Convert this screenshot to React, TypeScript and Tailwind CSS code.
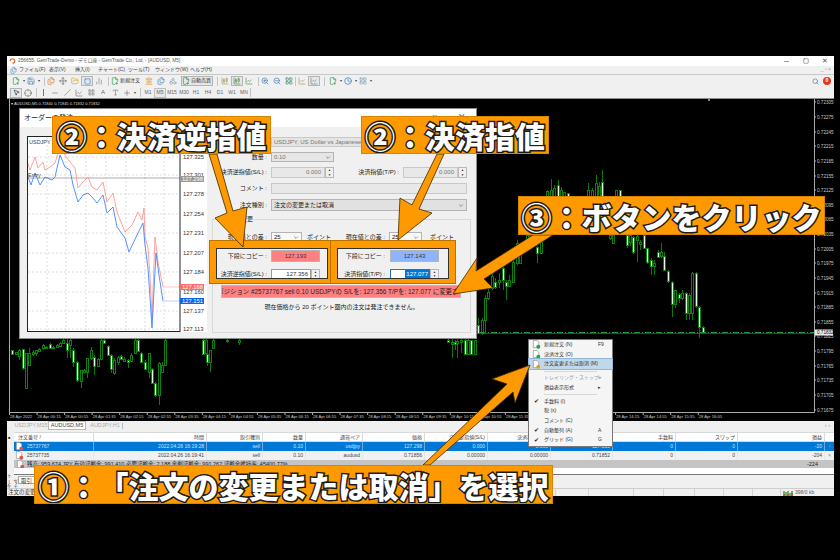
import React from 'react';
import {
  ChartCandlestick, ChartLine, ChartNoAxesColumn, Clock, Crosshair, FilePlus2, Files, FolderOpen, Landmark,
  LayoutGrid, Minus, MousePointer2, Move, Plus, Save, Search, Shapes, Slash, Square, Type, ZoomIn, ZoomOut,
} from 'lucide-react';

// x, wick top, body top, body bottom, wick bottom, light body
const candles: number[][] = [
  [12,350,350,354,355,1],[16,352,352,354,355,0],[19,349,350,356,360,0],[23,349,349,368,370,1],[26,353,353,388,388,0],[29,348,353,365,365,0],
  [33,350,352,354,356,0],[36,350,350,353,356,0],[39,348,349,351,352,0],[43,344,345,348,350,0],[46,346,347,348,349,0],[50,343,344,348,349,1],[53,346,347,348,348,0],[57,344,345,347,348,0],
  [60,342,343,346,347,0],[63,339,340,343,344,0],[67,339,343,350,358,1],[70,339,340,345,358,0],[73,348,350,362,367,1],[77,361,362,380,382,1],[81,370,370,381,388,0],[84,369,370,372,373,0],
  [87,358,358,372,378,0],[91,347,350,358,360,0],[94,355,357,366,375,1],[98,358,359,366,367,0],[101,339,340,359,360,0],[104,339,340,343,344,1],[108,345,346,355,356,1],[111,354,355,369,373,1],
  [114,358,360,373,375,0],[118,356,357,362,365,0],[121,355,356,359,360,1],[124,357,359,361,362,0],[128,359,360,362,368,1],[131,353,355,361,362,0],[135,339,340,353,354,0],[138,339,340,351,352,1],
  [141,352,353,362,363,1],[145,360,362,369,370,1],[149,353,353,372,378,0],[152,368,369,383,384,1],[155,382,383,395,397,1],[159,362,363,395,405,0],[162,362,365,372,372,0],[165,339,340,365,366,0],
  [203,339,340,354,355,1],[206,339,340,353,355,0],[207,352,354,362,366,1],[210,350,350,362,372,0],[213,339,340,348,349,0],[227,339,340,341,343,0],[239,339,340,342,345,0],
  [448,339,340,342,343,1],[452,339,342,344,358,0],[455,340,342,344,350,1],[457,339,341,343,358,0],[461,339,340,342,353,0],[465,339,340,354,354,1],[468,339,340,354,354,0],
  [471,340,340,354,354,1],[475,340,340,354,354,0],[478,318,325,333,334,1],[482,318,320,333,335,0],[485,295,298,320,333,0],[488,288,292,298,300,0],[492,273,276,288,290,0],[495,278,282,287,289,1],
  [499,273,280,282,288,0],[503,257,268,280,290,1],[506,280,282,286,300,1],[509,275,280,286,287,0],[513,260,262,282,283,0],[517,240,243,263,265,0],[520,245,247,263,264,0],[523,243,245,248,250,0],
  [527,235,235,247,250,0],[530,235,235,245,246,0],[533,235,235,242,243,1],[537,245,247,253,263,1],[541,235,235,253,254,0],[547,190,191,196,196,0],[551,179,190,196,196,0],[554,185,188,196,196,0],
  [558,180,185,196,196,1],[561,187,190,196,196,0],[564,192,192,196,196,0],[568,193,193,196,196,1],[588,183,190,196,196,0],[592,188,190,196,196,0],[596,175,183,196,196,0],[599,182,186,196,196,0],
  [602,170,182,196,196,1],[616,190,190,196,196,0],[620,190,190,196,196,1],[610,235,235,238,240,0],[613,235,235,243,244,0],[627,235,235,245,248,1],[630,235,235,242,246,0],[633,236,237,252,254,1],
  [637,235,236,240,262,0],[640,240,242,244,250,0],[644,235,235,248,249,1],[647,248,248,262,264,1],[651,258,260,266,275,1],[654,260,263,266,275,0],[658,250,252,257,258,1],[661,243,252,256,258,0],
  [664,252,256,270,271,1],[668,270,271,281,283,1],[672,281,282,304,317,1],[675,290,290,304,308,0],[679,293,294,298,303,1],[682,290,293,298,300,0],[686,292,293,313,320,1],[689,293,295,313,320,0],
  [692,272,273,313,320,0],[696,272,273,306,308,1],[699,306,307,327,338,1],[703,326,327,332,333,1],
];

const priceLabels = [
  ['0.72305', 102], ['0.72275', 117], ['0.72245', 132], ['0.72215', 146], ['0.72185', 161], ['0.72155', 176], ['0.72125', 190], ['0.72095', 205],
  ['0.72065', 219], ['0.72035', 234], ['0.72005', 249], ['0.71975', 263], ['0.71945', 278], ['0.71915', 293], ['0.71885', 307], ['0.71855', 322],
  ['0.71825', 336], ['0.71795', 351], ['0.71765', 366], ['0.71735', 380], ['0.71705', 395], ['0.71675', 410],
] as const;

const timeLabels = [
  '28 Apr 2022', '28 Apr 00:15', '28 Apr 00:55', '28 Apr 01:35', '28 Apr 02:15', '28 Apr 02:55', '28 Apr 03:35', '28 Apr 04:15', '28 Apr 04:55',
  '28 Apr 05:35', '28 Apr 06:15', '28 Apr 06:55', '28 Apr 07:35', '28 Apr 08:15', '28 Apr 08:55', '28 Apr 09:35', '28 Apr 10:15', '28 Apr 10:55',
  '28 Apr 11:35', '28 Apr 12:15', '28 Apr 12:55', '28 Apr 13:35', '28 Apr 14:15', '28 Apr 14:55', '28 Apr 15:35', '28 Apr 16:05',
];

const redLine = '27,161 30,170 35,157 38,168 43,162 45,170 50,167 55,163 60,147 65,155 70,162 75,168 78,188 83,182 88,177 92,187 97,190 103,182 107,202 113,193 117,212 125,232 132,225 138,212 142,220 144,208 145,237 148,248 150,275 152,318 155,237 158,262 163,287';
const blueLine = '28,177 31,185 35,173 40,185 45,177 52,180 55,177 60,155 65,167 70,170 73,185 78,202 83,195 88,193 92,197 97,203 103,195 107,213 113,207 117,227 125,238 129,252 138,233 143,223 145,245 148,268 150,298 152,328 156,253 159,275 163,301';
const miniPrices = [
  ['127.325', 157], ['127.301', 175], ['127.278', 194], ['127.254', 214], ['127.231', 233], ['127.207', 253], ['127.184', 272], ['127.160', 292], ['127.137', 311], ['127.113', 329],
] as const;

const columns = [
  { label: '注文番号', w: 'w-[80px]', left: true }, { label: '時間', w: 'w-[113px]' }, { label: '取引種別', w: 'w-[56px]' }, { label: '数量', w: 'w-[43px]' },
  { label: '通貨ペア', w: 'w-[57px]' }, { label: '価格', w: 'w-[62px]' }, { label: '決済逆指値(S/L)', w: 'w-[63px]' }, { label: '決済指値(T/P)', w: 'w-[63px]' },
  { label: '決済価格', w: 'w-[62px]' }, { label: '手数料', w: 'w-[63px]' }, { label: 'スワップ', w: 'w-[62px]' }, { label: '損益', w: 'w-[87px]' },
];

const rows = [
  { selected: true, cells: ['25737767', '2022.04.26 16:19:28', 'sell', '0.10', 'usdjpy', '127.298', '0.000', '0.000', '127.318', '0', '0', '-20'] },
  { selected: false, cells: ['25737735', '2022.04.26 16:19:41', 'sell', '0.10', 'audusd', '0.71856', '0.00000', '0.00000', '0.71852', '0', '0', '-204'] },
];

const menuBar = [
  ['ファイル(F)', 'w-[30px]'], ['表示(V)', 'w-[26px]'], ['挿入(I)', 'w-[23px]'], ['チャート(C)', 'w-[30px]'], ['ツール(T)', 'w-[27px]'], ['ウィンドウ(W)', 'w-[35px]'], ['ヘルプ(H)', 'w-[24px]'],
];

const periods = ['M1', 'M5', 'M15', 'M30', 'H1', 'H4', 'D1', 'W1', 'MN'];

const Tool = ({ children, active }: { children: React.ReactNode; active?: boolean }) => (
  <div className={`flex h-[10px] w-[12px] shrink-0 items-center justify-center ${active ? 'border border-[#b5b5b5] bg-[#e2e8ee]' : ''}`}>{children}</div>
);
const Sep = ({ className }: { className: string }) => <div className={`h-[9px] w-px shrink-0 bg-[#c4c4c4] ${className}`} />;
const Drop = () => <span className="w-[3px] shrink-0 text-center text-[4px] leading-none text-[#444]">▾</span>;

const Spinner = () => (
  <div className="flex h-full w-[9px] shrink-0 flex-col border border-[#b8b8b8] bg-[#f0f0f0] text-center text-[3px] leading-[4px] text-[#222]">
    <span className="flex-1">▲</span>
    <span className="flex-1">▼</span>
  </div>
);

const SelectBox = ({ value, className, muted }: { value: string; className: string; muted?: boolean }) => (
  <div className={`flex items-center justify-between border border-[#b4b4b4] px-[2px] text-[6px] ${muted ? 'bg-[#e6e6e6] text-[#777]' : 'bg-[#f8f8f8] text-[#222]'} ${className}`}>
    <span className="whitespace-nowrap">{value}</span>
    <svg viewBox="0 0 8 5" className="h-[3px] w-[6px]"><path d="M1 1l3 3 3-3" fill="none" stroke="#555" strokeWidth="1" /></svg>
  </div>
);

const Label = ({ text, className }: { text: string; className: string }) => (
  <div className={`shrink-0 whitespace-nowrap pr-[4px] text-right text-[6px] text-[#222] ${className}`}>{text}</div>
);

const DocIcon = ({ badge }: { badge: string }) => (
  <svg viewBox="0 0 10 10" className="h-[9px] w-[9px] shrink-0">
    <path d="M1.5.5h4l2 2v6h-6z" fill="#fff" stroke="#888" strokeWidth=".7" />
    <circle cx="7" cy="7.4" r="2.2" fill={badge} />
  </svg>
);

const MenuItem = ({ text, shortcut, check, icon, muted, arrow, selected }: { text: string; shortcut?: string; check?: boolean; icon?: string; muted?: boolean; arrow?: boolean; selected?: boolean }) => (
  <div className={`flex h-[9.7px] items-center text-[5px] ${muted ? 'text-[#999]' : 'text-[#333]'} ${selected ? 'bg-[#bfd8ea] outline outline-[#8fb8d8]' : ''}`}>
    <div className="flex w-[15px] shrink-0 items-center justify-center text-[6px] text-[#222]">{icon ? <DocIcon badge={icon} /> : check ? '✔' : ''}</div>
    <div className="flex-1 whitespace-nowrap">{text}</div>
    <div className="w-[14px] shrink-0 text-[5px]">{shortcut}{arrow ? '▸' : ''}</div>
  </div>
);

const Callout = ({ text, className }: { text: string; className: string }) => (
  <div className={`absolute flex items-center justify-center overflow-hidden border border-[#d98400] bg-[#ff9900] text-[30px] font-black leading-none whitespace-nowrap text-white font-['Noto_Sans_CJK_JP',sans-serif] [text-spacing-trim:space-all] [-webkit-text-stroke:3px_#1c1c1c] [paint-order:stroke_fill] ${className}`}>
    {text}
  </div>
);

const ChartCanvas = () => (
  <svg viewBox="7 99 827 322" className="block h-[322px] w-[827px]">
    <rect x="7" y="99" width="827" height="322" fill="#000" />
    <path d="M9.5 99V412.5H814.5V99" fill="none" stroke="#aaa" strokeWidth="1" />
    <path d="M709 99v2" stroke="#6a8fb0" strokeWidth="2" />
    <text x="11" y="104.5" fontSize="4" fill="#ddd" fontFamily="Liberation Sans">▾ AUDUSD,M5  0.71840 0.71845 0.71832 0.71832</text>
    {candles.map(([x, t, bt, bb, b, light]) => (
      <g key={`${x}-${bt}`}>
        <path d={`M${x + 0.5} ${t}V${b}`} stroke="#0b7a0b" strokeWidth="1" />
        <rect x={x - 0.5} y={bt + 0.5} width="2" height={Math.max(bb - bt, 1)} fill={light ? '#dcffdc' : '#000'} stroke="#0d800d" strokeWidth="1" />
      </g>
    ))}
    <path d="M480 332.5H814" stroke="#1f9a3a" strokeWidth="1" strokeDasharray="6 2 1 2" />
    <path d="M480 333.5H814" stroke="#666" strokeWidth=".6" />
    {priceLabels.map(([label, y]) => (
      <g key={label}>
        <path d={`M814 ${y}h2`} stroke="#aaa" />
        <text x="817" y={y + 1.6} fontSize="4.6" fill="#c8c8c8" fontFamily="Liberation Sans">{label}</text>
      </g>
    ))}
    <rect x="815" y="329.5" width="18" height="6" fill="#e8e8e8" />
    <text x="817" y="334.2" fontSize="4.6" fill="#111" fontFamily="Liberation Sans">0.71832</text>
    {timeLabels.map((label, i) => (
      <g key={label}>
        <path d={`M${9.5 + i * 27.55} 412v3`} stroke="#aaa" />
        <text x={10 + i * 27.55} y="418" fontSize="4.1" fill="#c8c8c8" fontFamily="Liberation Sans">{label}</text>
      </g>
    ))}
  </svg>
);

const MiniChart = () => (
  <svg viewBox="27 136 180 196" className="block h-[196px] w-[180px] shrink-0">
    <rect x="27" y="136" width="180" height="196" fill="#fff" />
    {[47, 66, 86, 106, 126, 145, 164].map((x) => (
      <path key={x} d={`M${x} 137V331`} stroke="#cfcfcf" strokeWidth=".7" strokeDasharray="2 2" />
    ))}
    {miniPrices.map(([, y]) => (
      <path key={y} d={`M28 ${y}H180`} stroke="#cfcfcf" strokeWidth=".7" strokeDasharray="2 2" />
    ))}
    <path d="M28 178H180" stroke="#999" strokeWidth=".8" />
    <polyline points={redLine} fill="none" stroke="#ff8a8a" strokeWidth=".8" />
    <polyline points="163,287 180,287" fill="none" stroke="#ffd0d0" strokeWidth="1.2" />
    <polyline points={blueLine} fill="none" stroke="#2a78ff" strokeWidth=".8" />
    <polyline points="163,301 180,301" fill="none" stroke="#c3dbff" strokeWidth="1.2" />
    <rect x="27.5" y="136.5" width="152.5" height="195" fill="none" stroke="#222" strokeWidth="1" />
    <text x="29" y="143.5" fontSize="5.5" fill="#444" fontFamily="Liberation Sans">USDJPY</text>
    <text x="28" y="177" fontSize="5.5" fill="#444" fontFamily="Liberation Sans">Entry</text>
    {miniPrices.map(([label, y]) => (
      <text key={label} x="183" y={y + 2} fontSize="5.8" fill="#333" fontFamily="Liberation Sans">{label}</text>
    ))}
    <rect x="180" y="176" width="24" height="6" fill="#999" />
    <text x="182" y="181" fontSize="5.8" fill="#fff" fontFamily="Liberation Sans">127.298</text>
    <rect x="180" y="284" width="24" height="6" fill="#ff6b6b" />
    <text x="182" y="289" fontSize="5.8" fill="#fff" fontFamily="Liberation Sans">127.168</text>
    <rect x="180" y="298" width="24" height="6" fill="#0a66f0" />
    <text x="182" y="303" fontSize="5.8" fill="#fff" fontFamily="Liberation Sans">127.151</text>
  </svg>
);

const OrderDialog = () => (
  <div className="absolute left-[19px] top-[108px] flex h-[231px] w-[458px] flex-col border border-[#8c8c8c] bg-[#f0f0f0] font-['Liberation_Sans','Noto_Sans_CJK_JP',sans-serif]">
    <div className="flex h-[18px] shrink-0 items-center bg-white pl-[4px] pr-[10px] text-[7px] text-[#222]">
      <span>オーダーの発注</span>
      <span className="ml-auto flex items-center gap-[20px] text-[#666]">
        <Square size={6} />
        <span className="text-[9px]">✕</span>
      </span>
    </div>
    <div className="flex flex-1">
      <div className="ml-[7px] mt-[9px]">
        <MiniChart />
      </div>
      <div className="ml-[5px] mt-[10px] flex w-[259px] flex-col">
        <div className="flex h-[10px] items-center">
          <Label text="" className="w-[59px]" />
          <div className="mr-[4px] flex h-full flex-1 items-center border border-[#c9c9c9] bg-[#e4e4e4] px-[2px] text-[6px] text-[#777]">USDJPY, US Dollar vs Japanese Yen</div>
        </div>
        <div className="mt-[5px] flex h-[10px] items-center">
          <Label text="数量 :" className="w-[59px]" />
          <SelectBox value="0.10" muted className="h-full w-[63px]" />
        </div>
        <div className="mt-[5px] flex h-[11px] items-center">
          <Label text="決済逆指値(S/L) :" className="w-[59px]" />
          <div className="flex h-full w-[63px]">
            <div className="flex-1 border border-[#c9c9c9] bg-[#e8e8e8] pr-[3px] text-right text-[6px] text-[#777]">0.000</div>
            <Spinner />
          </div>
          <Label text="決済指値(T/P) :" className="w-[69px]" />
          <div className="flex h-full w-[64px]">
            <div className="flex-1 border border-[#c9c9c9] bg-[#e8e8e8] pr-[3px] text-right text-[6px] text-[#777]">0.000</div>
            <Spinner />
          </div>
        </div>
        <div className="mt-[5px] flex h-[11px] items-center">
          <Label text="コメント :" className="w-[59px]" />
          <div className="mr-[4px] h-full flex-1 border border-[#c9c9c9] bg-[#e8e8e8]" />
        </div>
        <div className="mt-[5px] flex h-[12px] items-center">
          <Label text="注文種別 :" className="w-[59px]" />
          <SelectBox value="注文の変更または取消" className="mr-[4px] h-full flex-1 !bg-[#e1e1e1]" />
        </div>
        <div className="relative mt-[8px] h-[114px] border border-[#d8d8d8]">
          <span className="absolute left-[3px] top-[-5px] bg-[#f0f0f0] px-[1px] text-[6px] text-[#222]">ストップ変更</span>
          <div className="mt-[12px] flex h-[10px] items-center">
            <Label text="現在値との差 :" className="w-[58px]" />
            <SelectBox value="25" className="h-full w-[31px]" />
            <span className="ml-[5px] w-[24px] whitespace-nowrap text-[6px] text-[#222]">ポイント</span>
            <Label text="現在値との差 :" className="w-[58px]" />
            <SelectBox value="25" className="h-full w-[33px] border-[#555]" />
            <span className="ml-[8px] whitespace-nowrap text-[6px] text-[#222]">ポイント</span>
          </div>
          <div className="mt-[8px] flex h-[12px] items-center">
            <Label text="下段にコピー :" className="w-[58px]" />
            <div className="flex h-full w-[49px] items-center justify-center border border-[#b5b5b5] bg-[#ff8080] text-[6px] text-[#333]">127.193</div>
            <Label text="下段にコピー :" className="ml-[11px] w-[58px]" />
            <div className="ml-[1px] flex h-full w-[49px] items-center justify-center border border-[#b5b5b5] bg-[#8fb4ff] text-[6px] text-[#333]">127.143</div>
          </div>
          <div className="mt-[7px] flex h-[10px] items-center">
            <Label text="決済逆指値(S/L) :" className="w-[58px]" />
            <div className="flex h-full w-[49px]">
              <div className="flex-1 border border-[#9a9a9a] bg-white pr-[2px] text-right text-[6px] text-[#333]">127.356</div>
              <Spinner />
            </div>
            <Label text="決済指値(T/P) :" className="ml-[11px] w-[58px]" />
            <div className="ml-[1px] flex h-full w-[49px]">
              <div className="flex flex-1 justify-end border border-[#1f6fd0] bg-white text-[6px]">
                <span className="bg-[#0078d7] px-[1px] text-white">127.077</span>
              </div>
              <Spinner />
            </div>
          </div>
          <div className="ml-[9px] mt-[7px] flex h-[11px] w-[238px] justify-center overflow-hidden whitespace-nowrap bg-[#ff8080] text-[6.4px] leading-[11px] text-[#222] shadow-[0_0_0_1px_#b9b9b9]">
            <span className="shrink-0">ポジション #25737767 sell 0.10 USDJPYの S/Lを: 127.356 T/Pを: 127.077 に変更する</span>
          </div>
          <div className="mt-[6px] text-center text-[6px] text-[#222]">現在価格から 20 ポイント圏内の注文は発注できません。</div>
        </div>
      </div>
    </div>
  </div>
);

const Terminal = () => (
  <div className="flex h-[75px] shrink-0 flex-col bg-[#f0f0f0] font-['Liberation_Sans','Noto_Sans_CJK_JP',sans-serif]">
    <div className="flex h-[9px] shrink-0 items-center pl-[7px] pr-[4px] text-[5.5px] text-[#aaa]">
      <span className="w-[34px] whitespace-nowrap text-center">USDJPY,M15</span>
      <span className="flex h-full w-[38px] items-center justify-center border border-[#bbb] bg-white text-[#444]">AUDUSD,M5</span>
      <span className="ml-[4px] w-[30px] whitespace-nowrap text-center">AUDJPY,H1</span>
      <span className="ml-[2px] h-[6px] w-px bg-[#bbb]" />
      <span className="ml-auto text-[#999]">‹ ›</span>
    </div>
    <div className="flex flex-1 pt-[2px]">
      <div className="relative w-[7px] shrink-0 bg-[#f0f0f0]">
        <span className="absolute left-[1px] top-[3px] text-[4px] text-[#333]">■</span>
        <span className="absolute left-[0px] top-[41px] rotate-180 text-[4.5px] text-[#333] [writing-mode:vertical-rl]">ターミナル</span>
      </div>
      <div className="flex flex-1 flex-col bg-white">
        <div className="flex h-[10px] shrink-0 border-y border-[#d8d8d8] bg-white text-[5px] text-[#444]">
          {columns.map((c) => (
            <div key={c.label} className={`${c.w} shrink-0 whitespace-nowrap border-r border-[#dcdcdc] pr-[2px] leading-[8px] ${c.left ? 'pl-[4px] text-left' : 'text-right'}`}>{c.label}{c.left ? '  /' : ''}</div>
          ))}
        </div>
        {rows.map((r) => (
          <div key={r.cells[0]} className={`flex h-[9px] shrink-0 text-[5px] leading-[9px] ${r.selected ? 'bg-[#0078d7] text-[#cfe6fa]' : 'bg-[#f1f1f1] text-[#444]'}`}>
            {r.cells.map((cell, i) => (
              <div key={columns[i].label} className={`${columns[i].w} shrink-0 whitespace-nowrap border-r border-[#dcdcdc]/50 pr-[2px] ${i === 0 ? 'flex items-center gap-[3px] pl-[1px]' : 'text-right'}`}>
                {i === 0 && <DocIcon badge="#d9534f" />}
                {cell}
              </div>
            ))}
            <span className="ml-[3px] text-[5px] text-[#888]">×</span>
          </div>
        ))}
        <div className="flex h-[8px] shrink-0 items-center justify-between bg-[#c4c4c4] pl-[2px] pr-[16px] text-[5.5px] text-[#222]">
          <span className="flex items-center gap-[2px]"><DocIcon badge="#d9534f" />残高: 959 674 JPY  有効証拠金: 991 410  必要証拠金: 2 188  余剰証拠金: 991 262  証拠金維持率: 45400.77%</span>
          <span>-224</span>
        </div>
        <div className="flex-1 border-b border-[#777] bg-white" />
        <div className="flex h-[13px] shrink-0 bg-[#f0f0f0] pl-[4px]">
          <span className="mt-px h-[8px] border border-[#aaa] bg-white px-[2px] text-[5.5px] text-[#333]">取引</span>
        </div>
      </div>
    </div>
    <div className="flex h-[8px] shrink-0 items-center border-t border-[#cfcfcf] bg-[#f0f0f0] pl-[1px] text-[5.5px] text-[#333]">
      <span className="w-[547px]">注文の変更または取消</span>
      {['w-[33px]', 'w-[45px]', 'w-[30px]', 'w-[31px]', 'w-[29px]', 'w-[29px]', 'w-[28px]'].map((w, i) => (
        <span key={i} className={`${w} h-full shrink-0 border-l border-[#d4d4d4]`} />
      ))}
      <span className="flex h-full items-center gap-[2px] border-l border-[#d4d4d4] pl-[2px] text-[5px] text-[#555]">
        <svg viewBox="0 0 10 6" className="h-[6px] w-[10px]">
          <path d="M1 6V1M3 6V2M5 6V1M7 6V3M9 6V1" stroke="#2e9e2e" strokeWidth="1.4" />
          <path d="M1 6V4M5 6V4M9 6V3" stroke="#d23a3a" strokeWidth="1.4" />
        </svg>
        398/0 kb
      </span>
    </div>
  </div>
);

export default function App() {
  return (
    <div className="relative h-[560px] w-[840px] overflow-hidden bg-black">
      <div className="pl-[7px] pt-[56px]">
        <div className="flex h-[448px] w-[827px] flex-col font-['Liberation_Sans','Noto_Sans_CJK_JP',sans-serif]">
          <div className="flex h-[10px] shrink-0 items-center bg-white pl-[2px] pr-[6px] text-[4.8px] text-[#555]">
            <svg viewBox="0 0 8 8" className="mr-[2px] h-[6px] w-[7px]"><path d="M1 4a3 3 0 1 1 3 3" fill="none" stroke="#d9662b" strokeWidth="1.5" /></svg>
            <span>256655: GemTrade-Demo - デモ口座 - GemTrade Co., Ltd. - [AUDUSD, M5]</span>
            <span className="ml-auto flex items-center gap-[13px] text-[7px] text-[#555]">
              <Minus size={7} />
              <Square size={6} />
              <span className="text-[7px]">✕</span>
            </span>
          </div>
          <div className="flex h-[9px] shrink-0 items-center border-b border-[#c8c8c8] bg-[#f0f0f0] pl-[3px] pr-[3px] text-[5px] text-[#444]">
            <Files size={7} className="mr-[2px] text-[#4a86c5]" />
            {menuBar.map(([t, w]) => (
              <span key={t} className={`${w} shrink-0 whitespace-nowrap`}>{t}</span>
            ))}
            <span className="ml-auto text-[5px] text-[#999]">_ ▫ ×</span>
          </div>
          <div className="flex h-[12px] shrink-0 items-center bg-[#f0f0f0] pl-[3px] pr-[3px]">
            <Tool><FilePlus2 size={8} className="text-[#2e9e4f]" /></Tool><Drop />
            <Tool><Save size={8} className="text-[#4a7fc0]" /></Tool><Drop /><Sep className="ml-[4px]" />
            <Tool><Files size={8} className="text-[#d07d30]" /></Tool>
            <Tool><Move size={8} className="text-[#666]" /></Tool>
            <Tool><FolderOpen size={8} className="text-[#d9ad2b]" /></Tool>
            <Tool active><Square size={7} className="text-[#3a76b5]" /></Tool>
            <Tool><ChartNoAxesColumn size={8} className="text-[#888]" /></Tool><Sep className="ml-[3px] mr-[2px]" />
            <div className="flex w-[32px] shrink-0 items-center gap-[1px] whitespace-nowrap text-[5px] text-[#333]"><FilePlus2 size={8} className="text-[#2e9e4f]" />新規注文</div>
            <Tool><Landmark size={8} className="text-[#d99a2b]" /></Tool>
            <Tool><Files size={8} className="text-[#4a86c5]" /></Tool>
            <Tool><Shapes size={8} className="text-[#7f9fb5]" /></Tool>
            <div className="ml-[2px] flex h-[10px] w-[32px] shrink-0 items-center gap-[1px] whitespace-nowrap border border-[#b5b5b5] bg-[#e6e6e6] text-[5px] text-[#333]"><FilePlus2 size={8} className="text-[#2e8f5f]" />自動売買</div><Sep className="ml-[4px] mr-[1px]" />
            <Tool><ChartCandlestick size={8} className="text-[#9a9a5a]" /></Tool>
            <Tool active><ChartCandlestick size={8} className="text-[#5a8a3a]" /></Tool>
            <Tool><ChartLine size={8} className="text-[#5a8a5a]" /></Tool><Sep className="ml-[3px]" />
            <Tool><ZoomIn size={8} className="text-[#3a76b5]" /></Tool>
            <Tool><ZoomOut size={8} className="text-[#3a76b5]" /></Tool>
            <Tool><LayoutGrid size={8} className="text-[#3a8a6a]" /></Tool><Sep className="" />
            <Tool><ChartLine size={8} className="text-[#9a9a5a]" /></Tool>
            <Tool active><ChartLine size={8} className="text-[#7a8a5a]" /></Tool><Sep className="ml-[4px] mr-[2px]" />
            <Tool><FilePlus2 size={8} className="text-[#2e9e4f]" /></Tool><Drop />
            <Tool><Clock size={8} className="text-[#2f6fb5]" /></Tool><Drop />
            <Tool><LayoutGrid size={8} className="text-[#7f9fb5]" /></Tool><Drop />
            <Search size={7} className="ml-auto text-[#2f6fb5]" />
            <span className="ml-[4px] flex h-[8px] w-[8px] items-center justify-center rounded-full bg-[#e0392b] text-[5px] font-bold text-white">0</span>
          </div>
          <div className="flex h-[12px] shrink-0 items-center border-b border-[#8f8f8f] bg-[#f0f0f0] pl-[3px]">
            <Tool active><MousePointer2 size={7} className="text-[#222]" /></Tool>
            <Tool><Crosshair size={8} className="text-[#777]" /></Tool><Sep className="ml-[2px]" />
            <Tool><span className="h-[7px] w-px bg-[#777]" /></Tool>
            <Tool><Minus size={8} className="text-[#777]" /></Tool>
            <Tool><Slash size={7} className="text-[#777]" /></Tool>
            <Tool><ChartLine size={8} className="text-[#777]" /></Tool>
            <Tool><LayoutGrid size={7} className="text-[#777]" /></Tool>
            <Tool><span className="text-[6px] text-[#666]">A</span></Tool>
            <Tool><Type size={7} className="text-[#777]" /></Tool>
            <Tool><Plus size={8} className="text-[#777]" /></Tool><Drop /><Sep className="ml-[4px] mr-[1px]" />
            {periods.map((p) => (
              <span key={p} className={`flex h-[10px] w-[12px] shrink-0 items-center justify-center text-[5px] text-[#666] ${p === 'M5' ? 'border border-[#c0c0c0] bg-[#e8e8e8]' : ''}`}>{p}</span>
            ))}
            <Sep className="" />
          </div>
          <ChartCanvas />
          <Terminal />
        </div>
      </div>

      <OrderDialog />

      {/* context menu */}
      <div className="absolute left-[528px] top-[339px] h-[108px] w-[85px] border border-[#777] bg-[#f5f5f5] font-['Liberation_Sans','Noto_Sans_CJK_JP',sans-serif]">
        <MenuItem text="新規注文 (N)" shortcut="F9" icon="#2e9e4f" />
        <MenuItem text="決済注文 (O)" icon="#2e9e4f" />
        <MenuItem text="注文変更または取消 (M)" icon="#d9a32b" selected />
        <div className="mx-[15px] my-[1.5px] h-px bg-[#d8d8d8]" />
        <MenuItem text="トレイリング・ストップ" muted arrow />
        <MenuItem text="損益表示形式" arrow />
        <div className="mx-[15px] my-[1.5px] h-px bg-[#d8d8d8]" />
        <MenuItem text="手数料 (I)" check />
        <MenuItem text="税 (x)" />
        <MenuItem text="コメント (C)" />
        <MenuItem text="自動整列 (A)" shortcut="A" check />
        <MenuItem text="グリッド (G)" shortcut="G" check />
      </div>

      {/* orange frames around the copy fields */}
      <div className="absolute left-[210px] top-[241px] flex h-[42px] w-[120px] border-b-[4px] border-l-[6px] border-r-[2px] border-t-[7px] border-[#ff9900] outline outline-[#b87400]">
        <div className="flex-1 shadow-[inset_0_0_0_1px_#333]" />
      </div>
      <div className="absolute left-[331px] top-[241px] flex h-[42px] w-[124px] border-b-[4px] border-l-[6px] border-r-[6px] border-t-[7px] border-[#ff9900] outline outline-[#b87400]">
        <div className="flex-1 shadow-[inset_0_0_0_1px_#333]" />
      </div>

      {/* arrows */}
      <svg viewBox="0 0 840 560" className="pointer-events-none absolute inset-0 h-[560px] w-[840px]">
        <g fill="#ff9900" stroke="#3a2a00" strokeWidth=".8" strokeLinejoin="miter">
          <polygon points="209,154 217,154 233,211 247,207 243,247 215,218 227,213" />
          <polygon points="437,154 444,154 419,209 432,213 398,240 400,198 412,205" />
          <polygon points="453,294 477,258 476,271 533,235 553,235 484,279 493,288" />
          <polygon points="530,365 492,379 507,384 423,465 430,465 513,392 515,403" />
        </g>
      </svg>

      <Callout text="②：決済逆指値" className="left-[52px] top-[116px] h-[38px] w-[219px]" />
      <Callout text="②：決済指値" className="left-[361px] top-[116px] h-[38px] w-[188px]" />
      <Callout text="③：ボタンをクリック" className="left-[518px] top-[196px] h-[39px] w-[307px]" />
      <Callout text="①：「注文の変更または取消」を選択" className="left-[34px] top-[465px] h-[39px] w-[519px]" />
    </div>
  );
}
